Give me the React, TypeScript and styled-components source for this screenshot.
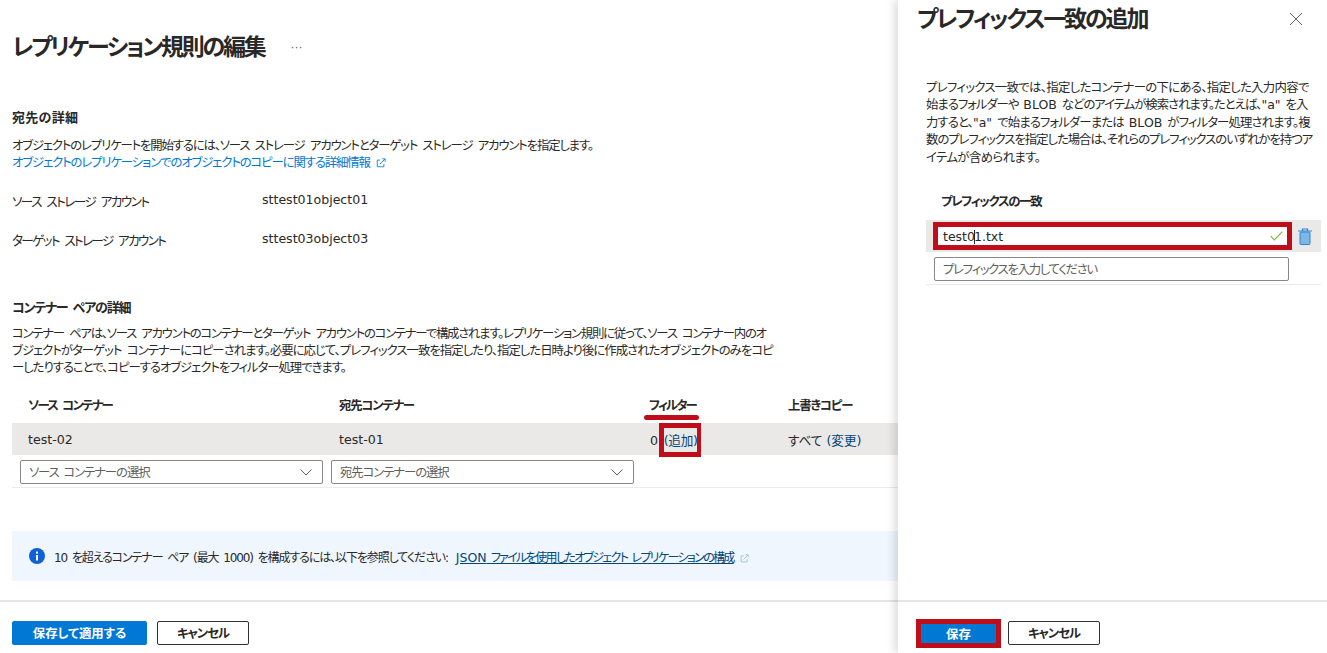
import React from "react";
import styled, { createGlobalStyle } from "styled-components";

const Global = createGlobalStyle`
  html, body { margin: 0; padding: 0; background: #fff; }
  body { font-family: "DejaVu Sans", "Noto Sans CJK JP", sans-serif; font-size: 13px; color: #292827; font-feature-settings: "palt"; overflow: hidden; }
`;
const Page = styled.div`display: grid; grid-template-columns: 898px 429px; width: 1327px; height: 653px; overflow: hidden;`;
const Left = styled.div`display: flex; flex-direction: column; height: 653px; min-width: 0;`;
const Right = styled.div`display: flex; flex-direction: column; height: 653px; box-shadow: -4px 0 8px rgba(0,0,0,.13); position: relative; background: #fff;`;
const LeftBody = styled.div`flex: 1; padding: 0 0 0 12px; display: flex; flex-direction: column;`;
const TitleRow = styled.div`display: flex; align-items: center; height: 34px; margin-top: 30px; gap: 26px;`;
const Title = styled.h1`margin: 0; font-size: 23px; letter-spacing: -2.25px; font-weight: 700; color: #292827; white-space: nowrap; line-height: 34px;`;
const More = styled.span`font-size: 12px; color: #605e5c; letter-spacing: 0; font-family: "Liberation Sans", sans-serif;`;
const Section = styled.h2<{ $top: number; $ls: number }>`margin: ${p => p.$top}px 0 0; font-size: 13px; letter-spacing: ${p => p.$ls}px; word-spacing: 2px; font-weight: 700; line-height: 18px; white-space: nowrap;`;
const Para = styled.div<{ $top: number }>`margin: ${p => p.$top}px 0 0; font-size: 12.4px; word-spacing: 2.5px; line-height: 17px; white-space: nowrap;`;
const Line = styled.div<{ $ls: number }>`letter-spacing: ${p => p.$ls}px;`;
const Link = styled.a`color: #0078d4; text-decoration: none; letter-spacing: -1.12px;`;
const Ext = styled.svg<{ $size: number; $gap: number }>`width: ${p => p.$size}px; height: ${p => p.$size}px; margin-left: ${p => p.$gap}px; vertical-align: -1px;`;
const AccountRow = styled.div<{ $top: number }>`display: grid; grid-template-columns: 250px 1fr; margin-top: ${p => p.$top}px; height: 18px; line-height: 18px; white-space: nowrap;`;
const AccountLabel = styled.span<{ $ls: number }>`font-size: 12.6px; letter-spacing: ${p => p.$ls}px; word-spacing: 3px; padding-top: 2px;`;
const AccountValue = styled.span`font-size: 12.55px;`;
const TableGrid = styled.div`display: grid; grid-template-columns: 311px 310px 139px 1fr;`;
const HeadRow = styled(TableGrid)`margin-top: 21px; height: 18px; line-height: 18px; padding-left: 16px; font-weight: 700; font-size: 12.4px; white-space: nowrap;`;
const HeadCell = styled.span<{ $ls: number }>`position: relative; letter-spacing: ${p => p.$ls}px; word-spacing: 2px;`;
const Underline = styled.span`position: absolute; left: -5px; top: 18px; width: 55px; height: 5px; border-radius: 2.5px; background: #c00d1a;`;
const DataRow = styled(TableGrid)`margin-top: 8px; height: 32px; align-items: center; padding-left: 16px; background: #ebe9e7; font-size: 12.6px; white-space: nowrap;`;
const Ln = styled.span`color: #004578;`;
const AddBox = styled.span`position: relative; padding-left: 1px;`;
const AddLink = styled(Ln)`margin-left: 2px; letter-spacing: -0.3px;`;
const Mark = styled.span`position: absolute; left: 10px; top: -7px; width: 42px; height: 34px; box-sizing: border-box; border: 5px solid #c00d1a; border-right-width: 4px;`;
const SelectRow = styled.div`display: flex; gap: 8px; padding: 5px 0 3px 8px; border-bottom: 1px solid #edebe9; height: 24px;`;
const Select = styled.div`width: 303px; height: 24px; box-sizing: border-box; border: 1px solid #8a8886; border-radius: 2px; display: flex; align-items: center; justify-content: space-between; padding: 0 10px 0 8px; color: #605e5c; font-size: 12.4px;`;
const SelectText = styled.span`letter-spacing: -1.1px; word-spacing: 2px;`;
const Banner = styled.div`margin-top: 43px; height: 50px; background: #eff6fe; border-radius: 2px 0 0 2px; display: flex; align-items: center; padding-left: 17px; gap: 9px; font-size: 12px; white-space: nowrap;`;
const BannerText = styled.span`letter-spacing: -1.1px; word-spacing: 2px;`;
const BannerLink = styled.a`color: #004578; text-decoration: underline; margin-left: 8px; letter-spacing: -1.66px; word-spacing: 2px;`;
const Lat = styled.span`letter-spacing: 0; font-size: 12.5px;`;
const Footer = styled.div`height: 53px; box-sizing: border-box; border-top: 2px solid #e5e5e5; display: flex; align-items: flex-start; padding: 19px 0 0 12px; gap: 10px; flex: none;`;
const Primary = styled.button<{ $w: number }>`width: ${p => p.$w}px; height: 24px; border: 0; border-radius: 2px; background: #0078d4; color: #fff; font: 700 12.4px "DejaVu Sans", "Noto Sans CJK JP", sans-serif; font-feature-settings: "palt"; padding: 0;`;
const Secondary = styled.button<{ $w: number }>`width: ${p => p.$w}px; height: 24px; box-sizing: border-box; border: 1px solid #323130; border-radius: 2px; background: #fff; color: #292827; font: 700 12.4px "DejaVu Sans", "Noto Sans CJK JP", sans-serif; font-feature-settings: "palt"; letter-spacing: -1px; padding: 0;`;
const RightBody = styled.div`flex: 1; display: flex; flex-direction: column; padding-left: 19px;`;
const RightHead = styled.div`display: flex; align-items: center; justify-content: space-between; height: 38px; padding-right: 24px;`;
const RightTitle = styled.h2`margin: -5px 0 0; font-size: 23px; letter-spacing: -2.2px; font-weight: 700; white-space: nowrap; color: #292827;`;
const RightPara = styled.div`margin: 41px 0 0 9px; font-size: 12.4px; word-spacing: 2px; line-height: 17.4px; white-space: nowrap;`;
const PrefixLabel = styled.div`margin: 27px 0 0 24px; font-weight: 700; font-size: 12.4px; letter-spacing: -1.3px; line-height: 18px; white-space: nowrap;`;
const PrefixRow = styled.div`margin: 9px 6px 0 9px; height: 32px; background: #ebe9e7; display: flex; align-items: center; padding-left: 7px; gap: 6px; box-sizing: border-box;`;
const FilledInput = styled.div`width: 359px; height: 28px; box-sizing: border-box; border: 5px solid #c00d1a; background: #fff; display: flex; align-items: center; justify-content: space-between; padding: 0 4px 0 5px; font-size: 12.5px;`;
const Caret = styled.span`border-left: 1px solid #292827; height: 14px; display: inline-block; margin: 0 -1px 0 -1px; vertical-align: -3px;`;
const EmptyRow = styled.div`margin: 5px 6px 0 9px; padding: 0 0 3px 8px; border-bottom: 1px solid #edebe9;`;
const EmptyInput = styled.div`width: 355px; height: 24px; box-sizing: border-box; border: 1px solid #8a8886; border-radius: 2px; display: flex; align-items: center; padding-left: 8px; color: #605e5c; font-size: 12.4px; letter-spacing: -1.3px;`;
const RightFooter = styled.div`height: 53px; box-sizing: border-box; flex: none; border-top: 2px solid #e5e5e5; display: flex; align-items: flex-start; padding: 17px 0 0 18px; gap: 7px;`;
const SaveFrame = styled.div`box-sizing: border-box; width: 85px; height: 29px; border: 5px solid #c00d1a; display: flex;`;
const SaveButton = styled(Primary)`border-radius: 0; height: 19px; width: 75px;`;
const CancelWrap = styled.div`margin-top: 2px;`;
const ExtIcon = ({ c, size = 10, gap = 6 }: { c: string; size?: number; gap?: number }) => (
  <Ext $size={size} $gap={gap} viewBox="0 0 12 12" fill="none" stroke={c} strokeWidth="1"><path d="M9.5 7v3.5h-8v-8H5"/><path d="M4.5 7.5 10.5 1.5M7.5 1h3.5v3.5"/></Ext>
);
const Chevron = () => <svg width="12" height="7" viewBox="0 0 12 7" fill="none" stroke="#605e5c"><path d="M.5.5 6 6l5.5-5.5"/></svg>;

export default function App() {
  return (
    <Page>
      <Global />
      <Left>
        <LeftBody>
          <TitleRow><Title>レプリケーション規則の編集</Title><More>···</More></TitleRow>
          <Section $top={45} $ls={0.3}>宛先の詳細</Section>
          <Para $top={10}>
            <Line $ls={-1.15}>オブジェクトのレプリケートを開始するには、ソース ストレージ アカウントとターゲット ストレージ アカウントを指定します。</Line>
            <Line $ls={-1.12}><Link>オブジェクトのレプリケーションでのオブジェクトのコピーに関する詳細情報<ExtIcon c="#0078d4"/></Link></Line>
          </Para>
          <AccountRow $top={20}><AccountLabel $ls={-1.55}>ソース ストレージ アカウント</AccountLabel><AccountValue>sttest01object01</AccountValue></AccountRow>
          <AccountRow $top={21}><AccountLabel $ls={-1.66}>ターゲット ストレージ アカウント</AccountLabel><AccountValue>sttest03object03</AccountValue></AccountRow>
          <Section $top={51} $ls={-1.2}>コンテナー ペアの詳細</Section>
          <Para $top={8}>
            <Line $ls={-1.24}>コンテナー ペアは、ソース アカウントのコンテナーとターゲット アカウントのコンテナーで構成されます。レプリケーション規則に従って、ソース コンテナー内のオ</Line>
            <Line $ls={-0.98}>ブジェクトがターゲット コンテナーにコピーされます。必要に応じて、プレフィックス一致を指定したり、指定した日時より後に作成されたオブジェクトのみをコピ</Line>
            <Line $ls={-1.03}>ーしたりすることで、コピーするオブジェクトをフィルター処理できます。</Line>
          </Para>
          <HeadRow><HeadCell $ls={-1.65}>ソース コンテナー</HeadCell><HeadCell $ls={-1.2}>宛先コンテナー</HeadCell><HeadCell $ls={-1.8}>フィルター<Underline/></HeadCell><HeadCell $ls={-1.2}>上書きコピー</HeadCell></HeadRow>
          <DataRow><span>test-02</span><span>test-01</span><AddBox>0<AddLink> (追加)</AddLink><Mark/></AddBox><span>すべて <Ln>(変更)</Ln></span></DataRow>
          <SelectRow>
            <Select><SelectText>ソース コンテナーの選択</SelectText><Chevron/></Select>
            <Select><SelectText>宛先コンテナーの選択</SelectText><Chevron/></Select>
          </SelectRow>
          <Banner>
            <svg width="16" height="16" viewBox="0 0 16 16"><circle cx="8" cy="8" r="8" fill="#0f62d6"/><rect x="7" y="7" width="2" height="5.5" fill="#fff"/><rect x="7" y="3.6" width="2" height="2" fill="#fff"/></svg>
            <span><BannerText>10 を超えるコンテナー ペア (最大 1000) を構成するには、以下を参照してください:</BannerText><BannerLink><Lat>JSON</Lat> ファイルを使用したオブジェクト レプリケーションの構成</BannerLink><ExtIcon c="#8db4e8" size={9}/></span>
          </Banner>
        </LeftBody>
        <Footer><Primary $w={135}>保存して適用する</Primary><Secondary $w={92}>キャンセル</Secondary></Footer>
      </Left>
      <Right>
        <RightBody>
          <RightHead>
            <RightTitle>プレフィックス一致の追加</RightTitle>
            <svg width="14" height="14" viewBox="0 0 14 14" stroke="#605e5c" fill="none"><path d="M1 1l12 12M13 1 1 13"/></svg>
          </RightHead>
          <RightPara>
            <Line $ls={-0.68}>プレフィックス一致では、指定したコンテナーの下にある、指定した入力内容で</Line>
            <Line $ls={-1.03}>始まるフォルダーや <Lat>BLOB</Lat> などのアイテムが検索されます。たとえば、<Lat>"a"</Lat> を入</Line>
            <Line $ls={-0.88}>力すると、<Lat>"a"</Lat> で始まるフォルダーまたは <Lat>BLOB</Lat> がフィルター処理されます。複</Line>
            <Line $ls={-1.05}>数のプレフィックスを指定した場合は、それらのプレフィックスのいずれかを持つア</Line>
            <Line $ls={-0.6}>イテムが含められます。</Line>
          </RightPara>
          <PrefixLabel>プレフィックスの一致</PrefixLabel>
          <PrefixRow>
            <FilledInput><span>test0<Caret/>1.txt</span><svg width="13" height="10" viewBox="0 0 13 10" fill="none" stroke="#7fba3c" strokeWidth="1.2"><path d="M.7 5.2 4.3 9 12.3.6"/></svg></FilledInput>
            <svg width="14" height="17" viewBox="0 0 14 17"><rect x="2" y="4" width="10" height="12.5" rx="1" fill="#7fb6e6" stroke="#2a86d6"/><path d="M0 3h14M4.5 3V1h5v2" stroke="#2a86d6" fill="none" strokeWidth="1.2"/></svg>
          </PrefixRow>
          <EmptyRow><EmptyInput>プレフィックスを入力してください</EmptyInput></EmptyRow>
        </RightBody>
        <RightFooter><SaveFrame><SaveButton $w={75}>保存</SaveButton></SaveFrame><CancelWrap><Secondary $w={92}>キャンセル</Secondary></CancelWrap></RightFooter>
      </Right>
    </Page>
  );
}
